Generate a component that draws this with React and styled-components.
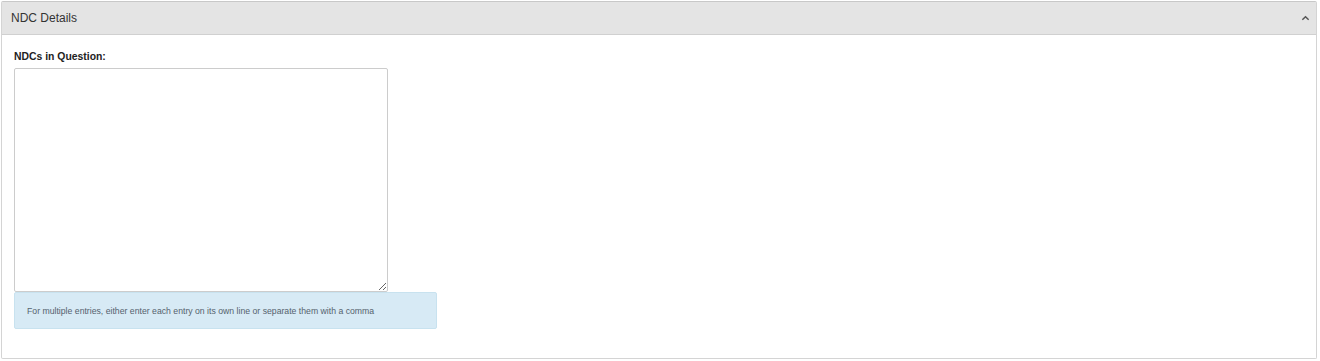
import React from "react";
import styled, { createGlobalStyle } from "styled-components";

const GlobalStyle = createGlobalStyle`
  html, body {
    margin: 0;
    padding: 0;
    background: #ffffff;
    font-family: "Liberation Sans", Arial, sans-serif;
  }
`;

const Page = styled.div`
  width: 1320px;
  height: 361px;
  padding: 1px 3px 0 1px;
  box-sizing: border-box;
`;

const Panel = styled.section`
  border: 1px solid #d4d4d4;
  border-top-color: #c8c8c8;
  border-radius: 2px;
  height: 358px;
  box-sizing: border-box;
  background: #fff;
`;

const PanelHeader = styled.div`
  display: flex;
  align-items: center;
  justify-content: space-between;
  height: 31px;
  padding: 0 6px 1px 9px;
  background: #e4e4e4;
  border-bottom: 1px solid #d0d0d0;
  box-sizing: content-box;
  color: #333;
  font-size: 12px;
`;

const Chevron = styled.svg`
  width: 9px;
  height: 9px;
  margin-top: 1px;
`;

const PanelBody = styled.div`
  padding: 16px 12px 0 12px;
`;

const Label = styled.label`
  display: block;
  font-size: 10.4px;
  font-weight: 700;
  color: #222;
  margin-bottom: 6px;
`;

const TextArea = styled.textarea`
  display: block;
  width: 374px;
  height: 224px;
  margin: 0;
  border: 1px solid #cccccc;
  border-radius: 2px;
  box-sizing: border-box;
  resize: both;
  font-family: inherit;
`;

const InfoBox = styled.div`
  width: 423px;
  height: 37px;
  display: flex;
  align-items: center;
  padding: 0 12px;
  box-sizing: border-box;
  background: #d7eaf5;
  border: 1px solid #c8e2ef;
  border-radius: 2px;
  color: #55626d;
  font-size: 8.7px;
`;

export default function App() {
  return (
    <>
      <GlobalStyle />
      <Page>
        <Panel>
          <PanelHeader>
            <span>NDC Details</span>
            <Chevron viewBox="0 0 10 10">
              <path d="M1.5 6.5 L5 3 L8.5 6.5" fill="none" stroke="#555" strokeWidth="1.6" />
            </Chevron>
          </PanelHeader>
          <PanelBody>
            <Label>NDCs in Question:</Label>
            <TextArea />
            <InfoBox>
              For multiple entries, either enter each entry on its own line or separate them with a comma
            </InfoBox>
          </PanelBody>
        </Panel>
      </Page>
    </>
  );
}
